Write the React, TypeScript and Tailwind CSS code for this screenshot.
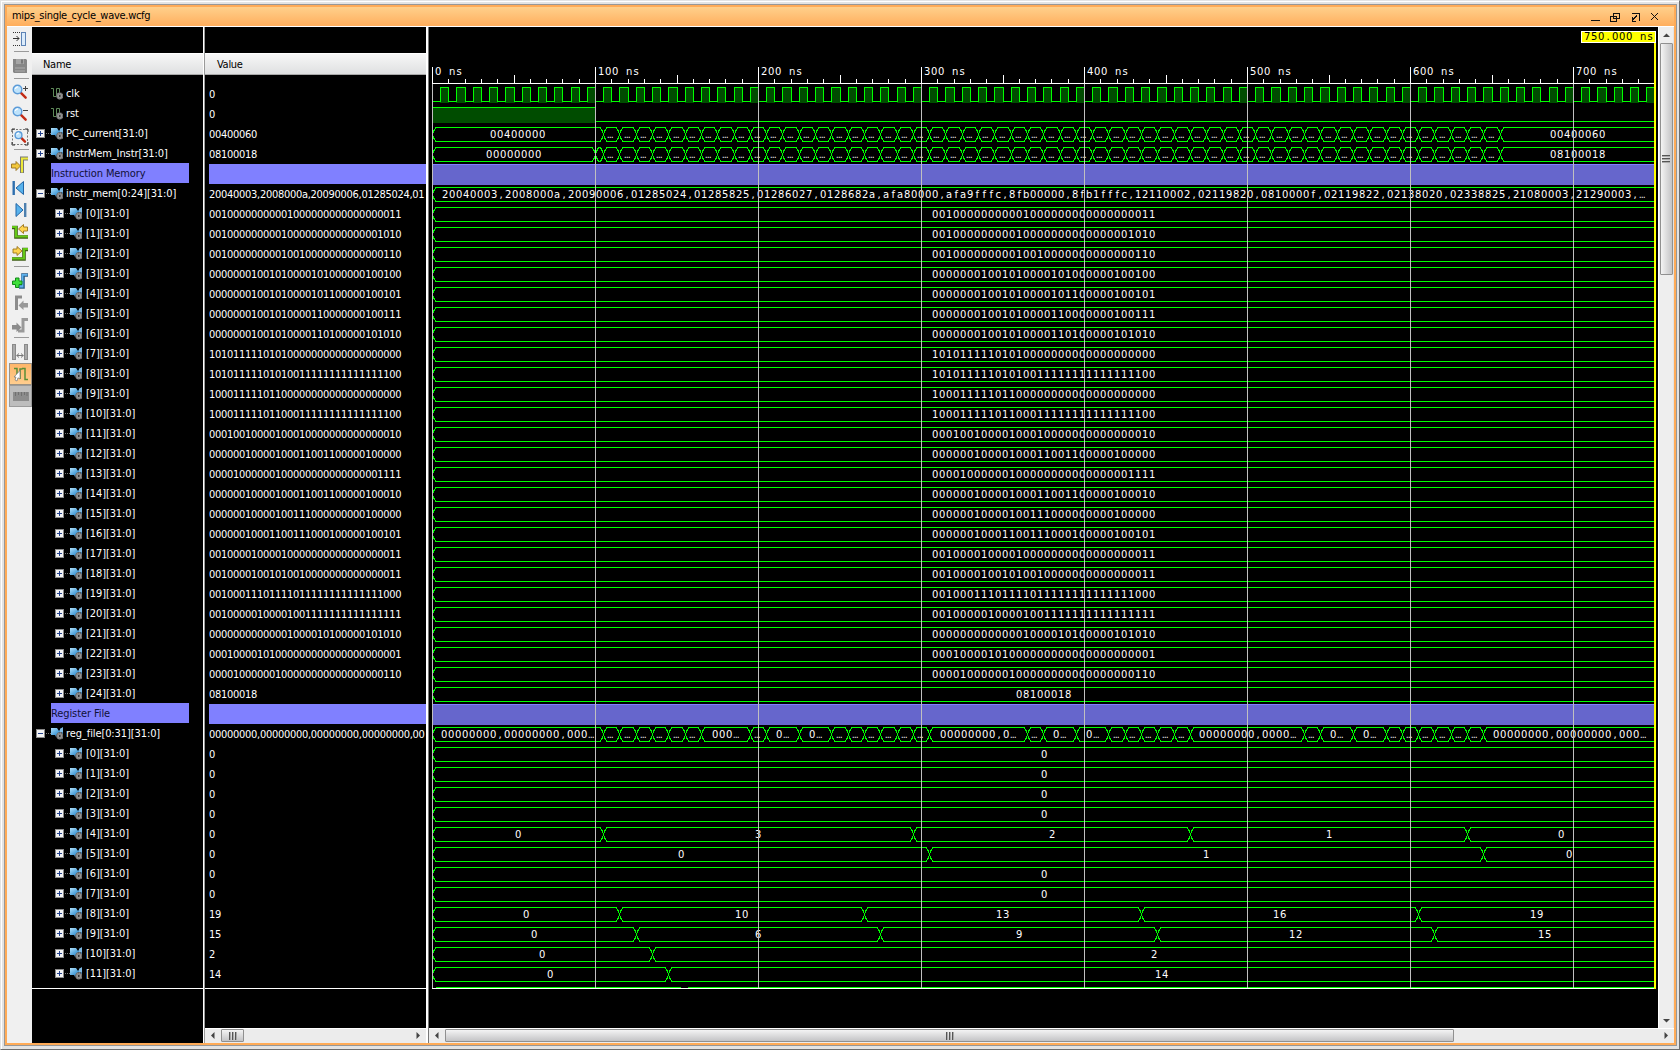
import React from "react";

type Seg = [number, string];

const WORDS = [
  "20040003", "2008000a", "20090006", "01285024", "01285825", "01286027", "0128682a",
  "afa80000", "afa9fffc", "8fb00000", "8fb1fffc", "12110002", "02119820", "0810000f",
  "02119822", "02138020", "02338825", "21080003", "21290003", "23bdfff8", "2084ffff",
  "0004282a", "10a00001", "08100006",
];
const BITS = WORDS.map((w) => parseInt(w, 16).toString(2).padStart(32, "0"));

const steps = (from: number, to: number): Seg[] => {
  const out: Seg[] = [];
  for (let t = from; t < to; t += 10) out.push([t, "…"]);
  return out;
};

type Row = {
  name: string;
  value: string;
  kind: "clk" | "rst" | "bus" | "label";
  depth?: number;
  open?: boolean;
  segs?: Seg[];
};

const REG_SEGS: Seg[][] = [
  [[0, "0"]],
  [[0, "0"]],
  [[0, "0"]],
  [[0, "0"]],
  [[0, "0"], [105, "3"], [295, "2"], [465, "1"], [635, "0"]],
  [[0, "0"], [305, "1"], [645, "0"]],
  [[0, "0"]],
  [[0, "0"]],
  [[0, "0"], [115, "10"], [265, "13"], [435, "16"], [605, "19"]],
  [[0, "0"], [125, "6"], [275, "9"], [445, "12"], [615, "15"]],
  [[0, "0"], [135, "2"]],
  [[0, "0"], [145, "14"]],
];
const REG_VALUES = ["0", "0", "0", "0", "0", "0", "0", "0", "19", "15", "2", "14"];

const ROWS: Row[] = [
  { name: "clk", value: "0", kind: "clk" },
  { name: "rst", value: "0", kind: "rst" },
  { name: "PC_current[31:0]", value: "00400060", kind: "bus", segs: [[0, "00400000"], ...steps(105, 655), [655, "00400060"]] },
  { name: "InstrMem_Instr[31:0]", value: "08100018", kind: "bus", segs: [[0, "00000000"], [100, ""], ...steps(105, 655), [655, "08100018"]] },
  { name: "Instruction Memory", value: "", kind: "label" },
  {
    name: "instr_mem[0:24][31:0]",
    value: WORDS.slice(0, 4).join(",") + ",01",
    kind: "bus",
    open: true,
    segs: [[0, WORDS.slice(0, 19).join(",") + ",…"]],
  },
  ...BITS.map((b, i): Row => ({ name: `[${i}][31:0]`, value: b, kind: "bus", depth: 1, segs: [[0, b]] })),
  { name: "[24][31:0]", value: "08100018", kind: "bus", depth: 1, segs: [[0, "08100018"]] },
  { name: "Register File", value: "", kind: "label" },
  {
    name: "reg_file[0:31][31:0]",
    value: "00000000,00000000,00000000,00000000,00",
    kind: "bus",
    open: true,
    segs: [
      [0, "00000000,00000000,000…"], ...steps(105, 165), [165, "000…"], [195, "…"], [205, "0…"], [225, "0…"],
      ...steps(245, 305), [305, "00000000,0…"], [365, "…"], [375, "0…"], [395, "0…"], ...steps(415, 465),
      [465, "00000000,0000…"], [535, "…"], [545, "0…"], [565, "0…"], ...steps(585, 645),
      [645, "00000000,00000000,000…"],
    ],
  },
  ...REG_SEGS.map((s, i): Row => ({ name: `[${i}][31:0]`, value: REG_VALUES[i], kind: "bus", depth: 1, segs: s })),
];

const END = 1654;
const X0 = 432;
const tx = (ns: number) => Math.round(X0 + ns * 1.63);

/* Fixed-pitch text: every glyph is centred in its own 7px cell. */
function Mono({ x, y, children, fill = "#fff" }: { x: number; y: number; children: string; fill?: string }) {
  const xs = children.split("").map((_, i) => x + i * 7 + 4).join(" ");
  const dots = children.endsWith("…");
  return (
    <text x={xs} y={y} fill={fill} textAnchor="middle" xmlSpace="preserve" className="text-[10px] font-['DejaVu_Sans','Liberation_Mono',monospace]">
      {dots ? children.slice(0, -1) : children}
      {dots && <tspan className="text-[10px] font-['Liberation_Mono',monospace]">…</tspan>}
    </text>
  );
}

function Bus({ top, segs }: { top: number; segs: Seg[] }) {
  const t = top + 0.5;
  const b = top + 14.5;
  const m = top + 7.5;
  let d = "";
  segs.forEach(([ns], i) => {
    const s = tx(ns) + 0.5;
    const last = i === segs.length - 1;
    const e = last ? END : tx(segs[i + 1][0]) + 0.5;
    const k = e - s < 9 ? 3 : 3.5;
    d += `M${s} ${m}L${s + 1.5} ${t + 3}L${s + k} ${t}`;
    d += last ? `H${e}` : `H${e - k}L${e - 1.5} ${t + 3}L${e} ${m}`;
    d += `M${s} ${m}L${s + 1.5} ${b - 3}L${s + k} ${b}`;
    d += last ? `H${e}` : `H${e - k}L${e - 1.5} ${b - 3}L${e} ${m}`;
  });
  return (
    <>
      <path d={d} fill="none" stroke="#00ff00" shapeRendering="crispEdges" />
      {segs.map(([ns, text], i) => {
        const s = tx(ns);
        const e = i === segs.length - 1 ? 1655 : tx(segs[i + 1][0]);
        const x = Math.floor((s + e - text.length * 7) / 2);
        return text ? (
          <Mono key={ns} x={text === "…" ? x - 1 : x} y={top + 11}>
            {text}
          </Mono>
        ) : null;
      })}
    </>
  );
}

function Clock({ top }: { top: number }) {
  const highs = Array.from({ length: 75 }, (_, i) => [tx(i * 10 + 5), tx(i * 10 + 10)]);
  const d = highs.map(([a, b]) => `V${top + 14.5}H${a + 0.5}V${top + 0.5}H${b + 0.5}`).join("");
  return (
    <g shapeRendering="crispEdges">
      {highs.map(([a, b]) => (
        <rect key={a} x={a} y={top} width={b - a + 1} height={16} fill="#004c00" />
      ))}
      <path d={`M${X0 + 1} ${top + 14.5}${d}`} fill="none" stroke="#00ff00" />
    </g>
  );
}

function Waves() {
  const minor = Array.from({ length: 75 }, (_, i) => i * 10);
  const major = Array.from({ length: 8 }, (_, i) => i * 100);
  return (
    <svg viewBox="429 27 1229 1001" width="1229" height="1001" className="block bg-black">
      {ROWS.map((r, k) => {
        const top = 87 + 20 * k;
        if (r.kind === "clk") return <Clock key={k} top={top} />;
        if (r.kind === "rst")
          return (
            <g key={k} shapeRendering="crispEdges">
              <rect x={433} y={top} width={163} height={16} fill="#004c00" />
              <path d={`M433 ${top + 0.5}H595.5V${top + 14.5}H${END}`} fill="none" stroke="#00ff00" />
            </g>
          );
        if (r.kind === "label")
          return (
            <g key={k}>
              <rect x={433} y={top - 3} width={1221} height={21} fill="#6666cc" />
              <rect x={433} y={top - 3} width={1221} height={1} fill="#8080ff" />
            </g>
          );
        return <Bus key={k} top={top} segs={r.segs ?? []} />;
      })}
      <path d="M436 987.5H681M688 987.5H1654" stroke="#00ff00" fill="none" shapeRendering="crispEdges" />
      <g shapeRendering="crispEdges">
        <rect x={432} y={83} width={1222} height={1} fill="#fff" />
        {minor.map((t) => {
          const h = t % 100 === 0 ? 16 : t % 50 === 0 ? 8 : 4;
          return <rect key={t} x={tx(t)} y={83 - h} width={1} height={h} fill="#fff" />;
        })}
        {major.map((t) => (
          <rect key={t} x={tx(t)} y={84} width={1} height={904} fill="#c0c0c0" />
        ))}
        <rect x={432} y={988} width={1224} height={1} fill="#fff" />
        <rect x={1654} y={43} width={2} height={946} fill="#ffff00" />
        <rect x={1581} y={31} width={75} height={12} fill="#fff" />
        <rect x={1582} y={32} width={73} height={10} fill="#ffff00" />
      </g>
      {major.map((t) => (
        <Mono key={t} x={tx(t) + 2} y={75}>{`${t} ns`}</Mono>
      ))}
      <Mono x={1583} y={40} fill="#000">750.000 ns</Mono>
    </svg>
  );
}

function Expander({ open }: { open?: boolean }) {
  return (
    <svg width="15" height="9" viewBox="0 0 15 9" className="block shrink-0" shapeRendering="crispEdges">
      <rect width="9" height="9" fill="#8a8a8a" />
      <rect x="1" y="1" width="7" height="7" fill="#f4f4f4" />
      <path d={open ? "M2 4.5H7" : "M2 4.5H7M4.5 2V7"} stroke="#24418c" />
      <path d="M10 4.5H15" stroke="#777" strokeDasharray="1 1" />
    </svg>
  );
}

function Gear() {
  return (
    <>
      <circle cx="8.8" cy="9" r="3.4" fill="#8c8c8c" />
      <circle cx="8.8" cy="9" r="3.2" fill="none" stroke="#4a4a4a" strokeDasharray="1 1.3" />
      <circle cx="8.8" cy="9" r="1.4" fill="#222" stroke="#bbb" strokeWidth=".6" />
    </>
  );
}

function BusIcon() {
  return (
    <svg width="12" height="13" viewBox="0 0 12 13" className="block shrink-0">
      <defs>
        <linearGradient id="bus" x1="0" y1="0" x2="1" y2="1">
          <stop offset="0" stopColor="#b4e2fb" />
          <stop offset=".5" stopColor="#4fa3dc" />
          <stop offset="1" stopColor="#1b5c96" />
        </linearGradient>
      </defs>
      <path d="M0 1H6L8 4L10 1H12V7L8 8L5 10L4 8H0Z" fill="url(#bus)" />
      <path d="M9 2L12 0V5L9 6Z" fill="#7fb9e2" />
      <path d="M5 9L7 5.5L11 5L12 12H7Z" fill="#555" />
      <Gear />
    </svg>
  );
}

function SignalIcon() {
  return (
    <svg width="12" height="13" viewBox="0 0 12 13" className="block shrink-0">
      <path d="M0 1.5H2.5V9.5H5.5V1.5H8.5V6" fill="none" stroke="#5f8a59" />
      <Gear />
    </svg>
  );
}

const UI = "font-['DejaVu_Sans_Condensed','DejaVu_Sans',sans-serif] text-[11px] tracking-[-0.29px]";

function NameRow({ row }: { row: Row }) {
  if (row.kind === "label")
    return (
      <div className="h-5 pl-[19px]">
        <div className="h-5 w-[138px] bg-[#8080ff] leading-[22px] text-[#101038]">{row.name}</div>
      </div>
    );
  const signal = row.kind !== "bus";
  return (
    <div className={row.depth ? "flex h-5 items-center pl-[23px]" : "flex h-5 items-center pl-1"}>
      {signal ? <div className="w-[15px]" /> : <Expander open={row.open} />}
      {signal ? <SignalIcon /> : <BusIcon />}
      <span className={row.depth ? "h-5 pl-1 leading-[22px]" : "h-5 pl-[3px] leading-[22px]"}>{row.name}</span>
    </div>
  );
}

function Grip({ vertical }: { vertical?: boolean }) {
  return (
    <div className={vertical ? "flex flex-col gap-px" : "flex gap-px"}>
      {[0, 1, 2].map((i) => (
        <div key={i} className={vertical ? "h-0.5 w-2 border-b border-[#aaa] bg-[#555]" : "h-2 w-0.5 border-r border-[#aaa] bg-[#555]"} />
      ))}
    </div>
  );
}

function Arrow({ d }: { d: string }) {
  return (
    <svg width="7" height="7" viewBox="0 0 7 7" className="block shrink-0">
      <path d={d} fill="#444" />
    </svg>
  );
}

function HScroll({ thumb }: { thumb: string }) {
  return (
    <div className="flex h-[15px] items-start border-t border-white bg-[#ececec]">
      <div className="flex w-4 shrink-0 justify-center pt-[3px] pr-0.5">
        <Arrow d="M5.5 0V7L2 3.5Z" />
      </div>
      <div className={thumb}>
        <Grip />
      </div>
      <div className="flex-1" />
      <div className="flex w-4 shrink-0 justify-center pt-[3px]">
        <Arrow d="M1.5 0V7L5 3.5Z" />
      </div>
    </div>
  );
}

function Tool({ children }: { children: React.ReactNode }) {
  return (
    <div className="flex h-[22px] items-center justify-center pl-px">
      <svg width="18" height="18" viewBox="0 0 18 18" className="block">
        {children}
      </svg>
    </div>
  );
}

function Sep({ className }: { className: string }) {
  return (
    <div className={className}>
      <div className="ml-[7px] h-px w-[15px] bg-[#9a9a9a]" />
    </div>
  );
}

function Lens({ cx = 6.5, cy = 6.5, r = 4.3 }: { cx?: number; cy?: number; r?: number }) {
  return (
    <>
      <path d={`M${cx + r * 0.8} ${cy + r * 0.8}L${cx + r * 1.9} ${cy + r * 1.9}`} stroke="#c22a14" strokeWidth="2.4" strokeLinecap="round" />
      <circle cx={cx} cy={cy} r={r} fill="#bfe3fb" stroke="#5b9bd8" strokeWidth="1.4" />
      <path d={`M${cx - r * 0.5} ${cy - 0.5}A${r * 0.6} ${r * 0.6} 0 0 1 ${cx + 0.5} ${cy - r * 0.6}`} stroke="#fff" fill="none" strokeWidth="1.2" />
    </>
  );
}

function Toolbar() {
  return (
    <div className="w-[25px] shrink-0 bg-[#f0f0f0] pt-px">
      <Tool>
        <path d="M2 2.5H11M2 15.5H11" stroke="#333" strokeDasharray="1 1" />
        <path d="M2 8.5H8M5.5 6L8 8.5L5.5 11" stroke="#333" fill="none" />
        <rect x="10.5" y="2.5" width="4" height="13" fill="#dcecfb" stroke="#5d83b5" />
      </Tool>
      <Sep className="h-[5px] pt-px" />
      <Tool>
        <path d="M2 2H15L16 3V16H3L2 15Z" fill="#868686" />
        <rect x="5" y="2" width="8" height="5" fill="#a5a5a5" />
        <rect x="10" y="2.5" width="2" height="4" fill="#777" />
        <rect x="4" y="10" width="10" height="5" fill="#999" />
        <path d="M4 12.5H14" stroke="#858585" />
      </Tool>
      <Sep className="h-1 pt-px" />
      <Tool>
        <Lens />
        <path d="M12 5.5H17M14.5 3V8" stroke="#444" />
      </Tool>
      <Tool>
        <Lens />
        <path d="M12 5.5H17" stroke="#444" />
      </Tool>
      <div className="h-px" />
      <Tool>
        <rect x="1.5" y="1.5" width="15" height="15" fill="none" stroke="#777" strokeDasharray="2 1.5" />
        <path d="M1 4V1H4M14 1H17V4M17 14V17H14M4 17H1V14" stroke="#333" fill="none" />
        <Lens cx={7.5} cy={7.2} r={3.4} />
      </Tool>
      <Sep className="h-1.5 pt-px" />
      <Tool>
        <path d="M11 17V2.5H17" stroke="#777" strokeWidth="4" fill="none" />
        <path d="M11 16.5V2.5H17" stroke="#ece93a" strokeWidth="2" fill="none" />
        <path d="M.5 8H5V5.5L9.5 10L5 14.5V12H.5Z" fill="#f2c83c" stroke="#957020" strokeWidth=".9" />
      </Tool>
      <div className="h-px" />
      <Tool>
        <rect x="1.5" y="2" width="2.4" height="14" fill="#2f6fae" />
        <path d="M12.5 2.5V15.5L5 9Z" fill="#58b2ec" stroke="#2165a5" />
      </Tool>
      <Tool>
        <rect x="13" y="2" width="2.4" height="14" fill="#4d7fae" />
        <path d="M5 2.5V15.5L12 9Z" fill="#58b2ec" stroke="#2165a5" />
      </Tool>
      <Tool>
        <path d="M1 4.5H5V14H17" stroke="#3e5d14" strokeWidth="3.6" fill="none" />
        <path d="M1 4H5V13.5H17" stroke="#63c817" strokeWidth="2.2" fill="none" />
        <path d="M16.5 4H12.5V1.5L7.5 6L12.5 10.5V8H16.5Z" fill="#ffd44f" stroke="#9a741b" strokeWidth=".9" />
      </Tool>
      <Tool>
        <path d="M1 14H13V4.5H17" stroke="#3e5d14" strokeWidth="3.6" fill="none" />
        <path d="M1 13.5H13V4H17" stroke="#63c817" strokeWidth="2.2" fill="none" />
        <path d="M2 4H6V1.5L11 6L6 10.5V8H2Z" fill="#ffd44f" stroke="#9a741b" strokeWidth=".9" />
      </Tool>
      <Sep className="h-[5px] pt-px" />
      <Tool>
        <path d="M8 15H12V3H17" stroke="#285b86" strokeWidth="3.6" fill="none" />
        <path d="M8 14.5H11.5V2.8H16.5" stroke="#5fb2ee" strokeWidth="1.8" fill="none" />
        <path d="M4.5 6H8V9H11V12.5H8V15.5H4.5V12.5H1.5V9H4.5Z" fill="#3ee03a" stroke="#128a18" />
      </Tool>
      <Tool>
        <path d="M11 3H5.5V16" stroke="#8d8d8d" strokeWidth="3" fill="none" />
        <path d="M17 9H12.5V6.5L7.5 11.5L12.5 16V13.5H17Z" fill="#999" />
      </Tool>
      <Tool>
        <path d="M7 15H12V3.5H17" stroke="#9a9a9a" strokeWidth="3" fill="none" />
        <path d="M1 9H5.5V6.5L10.5 11.5L5.5 16V13.5H1Z" fill="#8c8c8c" />
      </Tool>
      <Sep className="h-[5px] pt-px" />
      <Tool>
        <rect x="1.5" y="1.5" width="3" height="15" fill="#aaa" stroke="#8a8a8a" />
        <rect x="13.5" y="1.5" width="3" height="15" fill="#aaa" stroke="#8a8a8a" />
        <path d="M5.5 12.5H12.5M8 10.5L5.8 12.5L8 14.5M10 10.5L12.2 12.5L10 14.5" stroke="#777" fill="none" />
      </Tool>
      <div className="ml-0.5 flex h-[22px] items-center justify-center border border-[#9c9284] bg-gradient-to-b from-[#ffb669] to-[#ffcd8e]">
        <svg width="18" height="18" viewBox="0 0 18 18" className="block shrink-0">
          <path d="M2 3.5H5V14M8 14V4H10.5M10 3.5H13V14.5H16" stroke="#5b8f37" strokeWidth="1.5" fill="none" />
          <path d="M8 5.5V14L6 12.8L5 16L3 15L4 12H2Z" fill="#fff" stroke="#777" strokeWidth=".7" />
        </svg>
      </div>
      <div className="ml-0.5 flex h-[22px] items-center justify-center border border-[#9b9b9b] bg-[#bdbdbd]">
        <svg width="18" height="18" viewBox="0 0 18 18" className="block shrink-0">
          <rect x="1" y="5" width="16" height="9" fill="#8c8c8c" />
          <path d="M3.5 5V9M6.5 5V8M9.5 5V9M12.5 5V8M15 5V9" stroke="#707070" />
        </svg>
      </div>
    </div>
  );
}

const HEADER = "h-[22px] border-t border-b border-t-white border-b-[#a9a9a9] bg-gradient-to-b from-[#f7f7f7] to-[#dfe0e1] leading-[22px] text-black";

export default function App() {
  return (
    <div className="h-[1050px] w-[1680px] overflow-hidden border-t border-r border-b border-l border-t-[#e3e3e3] border-r-[#6e6e6e] border-b-[#6e6e6e] border-l-[#e3e3e3] bg-[#e3e3e3]">
      <div className="h-[1048px] w-[1678px] border-t border-l border-white pt-0.5 pl-0.5">
        <div className={`${UI} flex h-[1042px] w-[1673px] flex-col border border-[#979797]`}>
          <div className="flex h-full flex-col border-2 border-[#ffab57]">
            <div className="flex h-[20px] shrink-0 items-center border-b border-white bg-gradient-to-b from-[#ffd08b] to-[#ffae5d] pl-[5px]">
              <span className="flex-1 text-black">mips_single_cycle_wave.wcfg</span>
              <svg width="70" height="14" viewBox="1590 9 70 14" className="mr-[14px] block" shapeRendering="crispEdges" fill="none" stroke="#111">
                <path d="M1591 19.5H1600" />
                <path d="M1613.5 12.5H1619.5V17.5H1613.5ZM1610.5 15.5H1616.5V20.5H1610.5Z" />
                <path d="M1632 12.5H1639.5V20M1632 16V20.5H1636M1632 19.5L1637 14.5" />
                <path d="M1651 12L1658 19M1658 12L1651 19" />
              </svg>
            </div>
            <div className="flex min-h-0 flex-1 text-white">
              <Toolbar />
              <div className="w-[171px] shrink-0 overflow-hidden bg-black pt-[26px] whitespace-nowrap">
                <div className={`${HEADER} pl-[11px]`}>Name</div>
                <div className="h-[914px] border-b border-white pt-2 tracking-[-0.1px]">
                  {ROWS.map((r, i) => (
                    <NameRow key={i} row={r} />
                  ))}
                </div>
              </div>
              <div className="w-0.5 shrink-0 border-r border-[#9a9a9a] bg-white" />
              <div className="flex w-[221px] shrink-0 flex-col overflow-hidden bg-black pt-[26px] whitespace-nowrap">
                <div className={`${HEADER} shrink-0 pl-3`}>Value</div>
                <div className="h-[914px] shrink-0 border-b border-white pt-[9px] pl-1">
                  {ROWS.map((r, i) => (
                    <div key={i} className={r.kind === "label" ? "h-5 bg-[#8080ff]" : "h-5 leading-[22px]"}>
                      {r.value}
                    </div>
                  ))}
                </div>
                <div className="flex-1" />
                <HScroll thumb="flex h-[13px] w-[23px] shrink-0 items-center justify-center rounded-[1px] border border-[#909090] bg-gradient-to-b from-[#f4f4f4] to-[#c4c4c6]" />
              </div>
              <div className="w-[3px] shrink-0 border-r border-[#777] bg-white" />
              <div className="flex min-w-0 flex-1 flex-col">
                <div className="flex h-[1001px] shrink-0">
                  <Waves />
                  <div className="flex w-[15px] flex-col items-center border-l border-white bg-[#eeeeee]">
                    <div className="flex h-4 shrink-0 items-center">
                      <Arrow d="M0 5H7L3.5 1.5Z" />
                    </div>
                    <div className="flex h-[232px] w-[13px] shrink-0 items-center justify-center rounded-[1px] border border-[#909090] bg-gradient-to-r from-[#f4f4f4] to-[#c4c4c6]">
                      <Grip vertical />
                    </div>
                    <div className="flex-1" />
                    <div className="flex h-4 shrink-0 items-center">
                      <Arrow d="M0 2H7L3.5 5.5Z" />
                    </div>
                  </div>
                </div>
                <HScroll thumb="flex h-[13px] w-[1009px] shrink-0 items-center justify-center rounded-[1px] border border-[#909090] bg-gradient-to-b from-[#f4f4f4] to-[#c4c4c6]" />
              </div>
            </div>
          </div>
        </div>
      </div>
    </div>
  );
}
